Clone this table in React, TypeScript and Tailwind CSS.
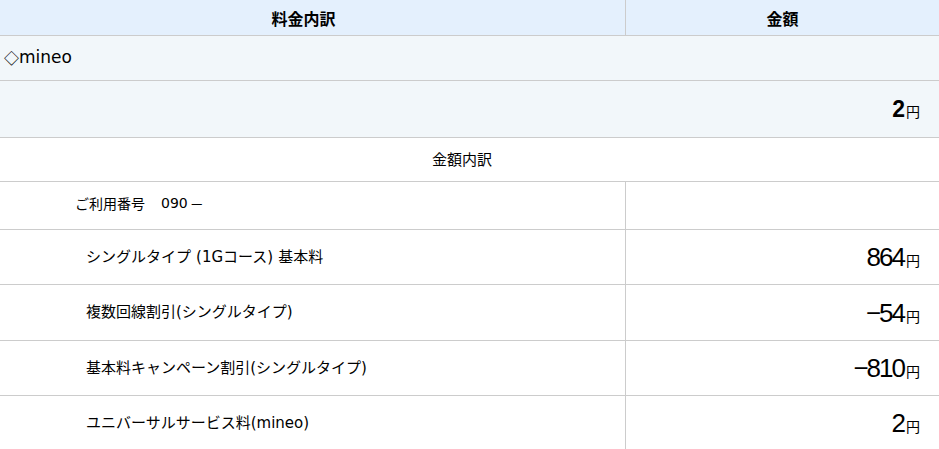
import React from "react";

const jp = { fontFamily: '"Noto Sans CJK JP", "Noto Sans", sans-serif' } as const;
const lbl = { fontFamily: '"DejaVu Sans", "Noto Sans CJK JP", sans-serif' } as const;
const num = { fontFamily: '"Liberation Sans", Arial, sans-serif' } as const;

function Amount({ v, bold }: { v: string; bold?: boolean }) {
  return (
    <div className="flex items-baseline justify-end pr-[19px]">
      {bold ? (
        <span style={num} className="text-[23px] font-bold leading-none tracking-[-1px]">{v}</span>
      ) : (
        <span style={num} className="text-[26px] leading-none tracking-[-2px]">{v}</span>
      )}
      <span style={jp} className="text-[14px] leading-none ml-[2px]">円</span>
    </div>
  );
}

const items = [
  {
    label: (
      <>
        シングルタイプ<span className="ml-[5px]">(</span>1Gコース<span className="mr-[5px]">)</span>基本料
      </>
    ),
    v: "864",
    h: "h-[55px]",
  },
  { label: "複数回線割引(シングルタイプ)", v: "−54", h: "h-[56px]" },
  { label: "基本料キャンペーン割引(シングルタイプ)", v: "−810", h: "h-[55px]" },
  { label: "ユニバーサルサービス料(mineo)", v: "2", h: "h-[55px]" },
];

export default function App() {
  return (
    <div className="w-[939px] h-[449px] overflow-hidden bg-white text-black" style={jp}>
      <div className="grid grid-cols-[625px_1fr] h-[36px] bg-[#e4f0fd] border-b border-[#cccccc]">
        <div className="flex items-center justify-center pr-[18px] text-[16px] font-bold">料金内訳</div>
        <div className="flex items-center justify-center border-l border-[#cccccc] text-[16px] font-bold">金額</div>
      </div>
      <div className="h-[45px] bg-[#f2f7fa] border-b border-[#cccccc] flex items-center pl-[4px]">
        <span style={jp} className="text-[15px]">◇</span>
        <span style={lbl} className="text-[17px]">mineo</span>
      </div>
      <div className="h-[57px] bg-[#f2f7fa] border-b border-[#cccccc] flex items-center justify-end">
        <Amount v="2" bold />
      </div>
      <div className="h-[44px] border-b border-[#cccccc] flex items-center justify-center pr-[15px] text-[15px]">
        金額内訳
      </div>
      <div className="grid grid-cols-[625px_1fr] h-[48px] border-b border-[#cccccc]">
        <div className="flex items-center pl-[75px] pb-[4px]">
          <span className="text-[14px]">ご利用番号</span>
          <span style={lbl} className="text-[14px] ml-[16px]">090</span>
          <span className="text-[14px] ml-[2px]">－</span>
        </div>
        <div className="border-l border-[#cccccc]" />
      </div>
      {items.map((it, i) => (
        <div key={i} className={`grid grid-cols-[625px_1fr] ${it.h} border-b border-[#cccccc]`}>
          <div style={lbl} className="flex items-center pl-[86px] text-[15px]">
            <span>{it.label}</span>
          </div>
          <div className="border-l border-[#cccccc] flex items-center justify-end">
            <Amount v={it.v} />
          </div>
        </div>
      ))}
    </div>
  );
}
